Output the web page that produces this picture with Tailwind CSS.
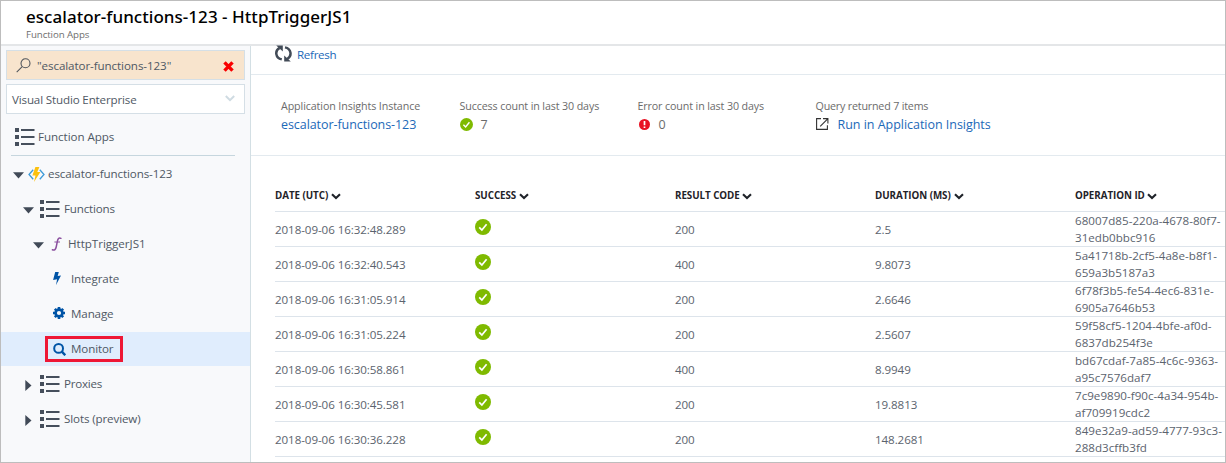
<!DOCTYPE html>
<html lang="en">
<head>
<meta charset="utf-8">
<title>escalator-functions-123 - HttpTriggerJS1</title>
<script src="https://cdn.jsdelivr.net/npm/@tailwindcss/browser@4"></script>
</head>
<body class="bg-white">
<svg class="hidden">
  <symbol id="list" viewBox="0 0 20 18"><path fill="#464f5c" d="M0 0h4v4H0zM0 7h4v4H0zM0 14h4v4H0zM6 1h13.5v2H6zM6 8h13.5v2H6zM6 15h13.5v2H6z"/></symbol>
  <symbol id="ok" viewBox="0 0 16 16"><circle cx="8" cy="8" r="8" fill="#7fba00"/><path d="M4.2 8.3 6.9 11 11.6 5.2" fill="none" stroke="#fff" stroke-width="1.7"/></symbol>
  <symbol id="chev" viewBox="0 0 10 7"><path d="M1 1.2 5 5 9 1.2" fill="none" stroke="#1f2329" stroke-width="2.1"/></symbol>
  <symbol id="down" viewBox="0 0 11 7"><path d="M0 .3h11L5.5 6.5z" fill="#414a57"/></symbol>
  <symbol id="right" viewBox="0 0 7 11"><path d="M.3 0v11L6.5 5.5z" fill="#414a57"/></symbol>
</svg>
<div class="flex h-[463px] w-[1226px] flex-col overflow-hidden border border-[#bdbdbd] bg-white font-['Open_Sans','Noto_Sans',sans-serif] text-[11.6px] tracking-[-0.12px] text-[#4f5864]">
  <header class="h-[45px] shrink-0 border-b-2 border-[#e4e6e8] pl-[25px] pt-[4px]">
    <h1 class="h-[23px] font-['Noto_Sans',sans-serif] text-[17px] font-medium leading-[24px] tracking-[0.04px] text-black">escalator-functions-123 - HttpTriggerJS1</h1>
    <p class="text-[9.7px] leading-[13px] tracking-[-0.08px] text-[#6e6e6e]">Function Apps</p>
  </header>
  <div class="flex min-h-0 flex-1">
    <aside class="flex w-[250px] shrink-0 flex-col border-r border-[#d3dfe4] bg-[#f8f9fb] pt-[4px]">
      <div class="ml-[5px] flex h-[30px] w-[239px] shrink-0 items-center border border-[#d5dfe6] bg-[#f8e4cd] pl-[9px] pr-[10px]">
        <svg class="h-[15px] w-[15px]" viewBox="0 0 15 15" fill="none" stroke="#50555c" stroke-width="1.1"><circle cx="9.5" cy="5.3" r="4.5"/><path d="M6.2 8.7.7 14.2"/></svg>
        <span class="ml-[6px] mt-px flex-1 tracking-[-0.08px]">"escalator-functions-123"</span>
        <svg class="mt-[2px] h-[11px] w-[11px]" viewBox="0 0 11 11"><path d="M1.5 1.3 9.5 9.7M9.5 1.3 1.5 9.7" stroke="#f90000" stroke-width="3.4"/></svg>
      </div>
      <div class="ml-[5px] mt-[4px] flex h-[30px] w-[239px] shrink-0 items-center justify-between border border-[#d5dfe6] bg-white pl-[5px] pr-[9px]">
        <span class="mt-px tracking-[-0.15px]">Visual Studio Enterprise</span>
        <svg class="-mt-[2px] h-[7px] w-[10px]" viewBox="0 0 10 7"><path d="M.8 1 5 5.2 9.2 1" fill="none" stroke="#cfdbe2" stroke-width="2"/></svg>
      </div>
      <div class="ml-[10px] mr-[15px] flex h-[42px] shrink-0 items-center border-b border-[#c6d6de] pl-[4px] pt-[5px]">
        <svg class="h-[18px] w-[20px]"><use href="#list"/></svg><span class="ml-[3px] tracking-[-0.05px]">Function Apps</span>
      </div>
      <nav>
        <div class="flex h-[35px] items-center pl-[12px]"><svg class="mt-[3px] h-[7px] w-[11px]"><use href="#down"/></svg>
          <svg class="ml-[4px] mt-px h-[15px] w-[17px]" viewBox="0 0 17 15"><path d="M5.2 2.7 1 7.5l4.2 4.8M11.8 2.7 16 7.5l-4.2 4.8" fill="none" stroke="#3f9bd8" stroke-width="1.3"/><path d="M7.4 0h4L9.3 5h3.1L6 15l1.5-6.6H4.4z" fill="#fcc10f"/></svg>
          <span class="ml-[3px]">escalator-functions-123</span></div>
        <div class="flex h-[35px] items-center pl-[22px]"><svg class="mt-[3px] h-[7px] w-[11px]"><use href="#down"/></svg><svg class="ml-[6px] h-[18px] w-[20px]"><use href="#list"/></svg><span class="ml-[4px] tracking-[-0.18px]">Functions</span></div>
        <div class="flex h-[35px] items-center pl-[32px]"><svg class="mt-[3px] h-[7px] w-[11px]"><use href="#down"/></svg>
          <svg class="ml-[7px] mt-px h-[14px] w-[12px]" viewBox="0 0 12 14" fill="none" stroke="#8a4f9e" stroke-linecap="round"><path stroke-width="1.5" d="M9.9 1.3C7.8.1 6.8 2 6.4 4.2L5.2 10c-.5 2.3-1.6 3.7-3.8 2.8"/><path stroke-width="1" d="M3.8 5h4.8"/></svg>
          <span class="ml-[5px] tracking-[-0.02px]">HttpTriggerJS1</span></div>
        <div class="flex h-[35px] items-center pl-[52px]"><svg class="-mt-px h-[13px] w-[8px]" viewBox="0 0 8 13"><path fill="#0054a6" d="M2.2 0h3.6L4.7 4 8 3.4 3 13 4.1 7.2.1 8z"/></svg><span class="ml-[10px]">Integrate</span></div>
        <div class="flex h-[35px] items-center pl-[52px]"><svg class="-mt-px h-[12px] w-[12px]" viewBox="0 0 12 12"><circle cx="6" cy="6" r="3.4" fill="none" stroke="#0054a6" stroke-width="2.6"/><path stroke="#0054a6" stroke-width="2.6" d="M6 0v2.4M6 9.6V12M0 6h2.4M9.6 6H12M1.8 1.8l1.6 1.6M8.6 8.6l1.6 1.6M10.2 1.8 8.6 3.4M3.4 8.6l-1.6 1.6"/></svg><span class="ml-[6px]">Manage</span></div>
        <div class="mt-px flex h-[34px] items-center bg-[#e0edfd] pl-[44px]"><div class="flex h-[26px] w-[78px] items-center border-3 border-[#ee1735] pl-[5px]"><svg class="h-[13px] w-[13px]" viewBox="0 0 13 13" fill="none" stroke="#0054a6"><circle cx="5.6" cy="5.4" r="4.4" stroke-width="2"/><path d="m8.8 8.6 3.5 3.6" stroke-width="2.4"/></svg><span class="ml-[5px]">Monitor</span></div></div>
        <div class="flex h-[35px] items-center pl-[24px]"><svg class="mt-[3px] h-[11px] w-[7px]"><use href="#right"/></svg><svg class="ml-[8px] h-[18px] w-[20px]"><use href="#list"/></svg><span class="ml-[4px] tracking-[-0.25px]">Proxies</span></div>
        <div class="flex h-[35px] items-center pl-[24px]"><svg class="mt-[3px] h-[11px] w-[7px]"><use href="#right"/></svg><svg class="ml-[8px] h-[18px] w-[20px]"><use href="#list"/></svg><span class="ml-[4px]">Slots (preview)</span></div>
      </nav>
    </aside>
    <main class="flex min-w-0 flex-1 flex-col">
      <div class="flex h-[29px] shrink-0 border-b border-[#e3eaef] pl-[24px]">
        <svg class="-mt-px h-[17px] w-[17px]" viewBox="0 0 17 17" fill="none" stroke="#424b57" stroke-width="2.5"><path d="M6.8 14.4C.2 13-.4 5.6 4.6 2.8M10 2.4c6.6 1.4 7.2 8.8 2.2 11.6"/><path stroke="none" fill="#424b57" d="M1.2.4h6.6v6.2L5.9 4.8zM15.8 16.6H9.2v-6.2l1.9 1.8z"/></svg>
        <span class="ml-[5px] leading-[18px] tracking-[-0.3px] text-[#1c69b8]">Refresh</span>
      </div>
      <section class="flex h-[81px] shrink-0 border-b border-[#e3eaef] pl-[30px] pt-[23px] text-[10.7px] leading-[17px] text-[#6b6b6b]">
        <div class="w-[178.5px]"><p class="tracking-[-0.1px]">Application Insights Instance</p><p class="mt-px text-[12.5px] leading-[18px] tracking-[-0.07px] text-[#1c69b8]">escalator-functions-123</p></div>
        <div class="w-[178px]"><p>Success count in last 30 days</p><p class="mt-px flex items-center text-[12.5px] leading-[18px]"><svg class="-mt-[2px] mr-[8px] h-[13px] w-[13px]"><use href="#ok"/></svg>7</p></div>
        <div class="w-[178px]"><p>Error count in last 30 days</p><p class="mt-px flex items-center text-[12.5px] leading-[18px]"><svg class="-mt-px ml-px mr-[9px] h-[11px] w-[11px]" viewBox="0 0 11 11"><circle cx="5.5" cy="5.5" r="5.5" fill="#e81123"/><path d="M5.5 2v4.3M5.5 7.5V9" stroke="#fff" stroke-width="1.7"/></svg>0</p></div>
        <div><p class="tracking-[-0.18px]">Query returned 7 items</p><p class="mt-px flex items-center text-[12.5px] leading-[18px] tracking-[-0.03px] text-[#1c69b8]"><svg class="mr-[9px] -mt-[2px] h-[12px] w-[13px]" viewBox="0 0 13 12" fill="none" stroke="#333" stroke-width="1.1"><path d="M5 .6H.6v10.8h10.8V7.2M7 .6h4.9v4.9M11.7.8 4.2 8.3"/></svg>Run in Application Insights</p></div>
      </section>
      <table class="ml-[24px] mt-[24px] w-[950px] table-fixed border-collapse text-left">
        <colgroup><col class="w-[200px]"><col class="w-[200px]"><col class="w-[200px]"><col class="w-[200px]"><col></colgroup>
        <thead class="text-[9.8px] tracking-[-0.05px] text-[#1f2329]">
          <tr class="h-[31px] border-b border-[#dde4eb]">
            <th class="p-0 pt-[2px] font-bold">DATE (UTC) <svg class="inline h-[7px] w-[10px]"><use href="#chev"/></svg></th>
            <th class="p-0 pt-[2px] font-bold">SUCCESS <svg class="inline h-[7px] w-[10px]"><use href="#chev"/></svg></th>
            <th class="p-0 pt-[2px] font-bold">RESULT CODE <svg class="inline h-[7px] w-[10px]"><use href="#chev"/></svg></th>
            <th class="p-0 pt-[2px] font-bold">DURATION (MS) <svg class="ml-px inline h-[7px] w-[10px]"><use href="#chev"/></svg></th>
            <th class="p-0 pt-[2px] font-bold">OPERATION ID <svg class="inline h-[7px] w-[10px]"><use href="#chev"/></svg></th>
          </tr>
        </thead>
        <tbody class="leading-[17px] tracking-[-0.08px] text-[#5b636e]">
          <tr class="h-[35px] border-b border-[#dde4eb]"><td class="p-0 pt-px">2018-09-06 16:32:48.289</td><td class="p-0"><svg class="-mt-[4px] block h-[16px] w-[16px]"><use href="#ok"/></svg></td><td class="p-0 pt-px">200</td><td class="p-0 pt-px">2.5</td><td class="p-0 tracking-[0.02px]">68007d85-220a-4678-80f7-<br>31edb0bbc916</td></tr>
          <tr class="h-[35px] border-b border-[#dde4eb]"><td class="p-0 pt-px">2018-09-06 16:32:40.543</td><td class="p-0"><svg class="-mt-[4px] block h-[16px] w-[16px]"><use href="#ok"/></svg></td><td class="p-0 pt-px">400</td><td class="p-0 pt-px">9.8073</td><td class="p-0 tracking-[0.02px]">5a41718b-2cf5-4a8e-b8f1-<br>659a3b5187a3</td></tr>
          <tr class="h-[35px] border-b border-[#dde4eb]"><td class="p-0 pt-px">2018-09-06 16:31:05.914</td><td class="p-0"><svg class="-mt-[4px] block h-[16px] w-[16px]"><use href="#ok"/></svg></td><td class="p-0 pt-px">200</td><td class="p-0 pt-px">2.6646</td><td class="p-0 tracking-[0.02px]">6f78f3b5-fe54-4ec6-831e-<br>6905a7646b53</td></tr>
          <tr class="h-[35px] border-b border-[#dde4eb]"><td class="p-0 pt-px">2018-09-06 16:31:05.224</td><td class="p-0"><svg class="-mt-[4px] block h-[16px] w-[16px]"><use href="#ok"/></svg></td><td class="p-0 pt-px">200</td><td class="p-0 pt-px">2.5607</td><td class="p-0 tracking-[0.02px]">59f58cf5-1204-4bfe-af0d-<br>6837db254f3e</td></tr>
          <tr class="h-[35px] border-b border-[#dde4eb]"><td class="p-0 pt-px">2018-09-06 16:30:58.861</td><td class="p-0"><svg class="-mt-[4px] block h-[16px] w-[16px]"><use href="#ok"/></svg></td><td class="p-0 pt-px">400</td><td class="p-0 pt-px">8.9949</td><td class="p-0 tracking-[0.02px]">bd67cdaf-7a85-4c6c-9363-<br>a95c7576daf7</td></tr>
          <tr class="h-[35px] border-b border-[#dde4eb]"><td class="p-0 pt-px">2018-09-06 16:30:45.581</td><td class="p-0"><svg class="-mt-[4px] block h-[16px] w-[16px]"><use href="#ok"/></svg></td><td class="p-0 pt-px">200</td><td class="p-0 pt-px">19.8813</td><td class="p-0 tracking-[0.02px]">7c9e9890-f90c-4a34-954b-<br>af709919cdc2</td></tr>
          <tr class="h-[35px] border-b border-[#dde4eb]"><td class="p-0 pt-px">2018-09-06 16:30:36.228</td><td class="p-0"><svg class="-mt-[4px] block h-[16px] w-[16px]"><use href="#ok"/></svg></td><td class="p-0 pt-px">200</td><td class="p-0 pt-px">148.2681</td><td class="p-0 tracking-[0.02px]">849e32a9-ad59-4777-93c3-<br>288d3cffb3fd</td></tr>
        </tbody>
      </table>
    </main>
  </div>
</div>
</body>
</html>
